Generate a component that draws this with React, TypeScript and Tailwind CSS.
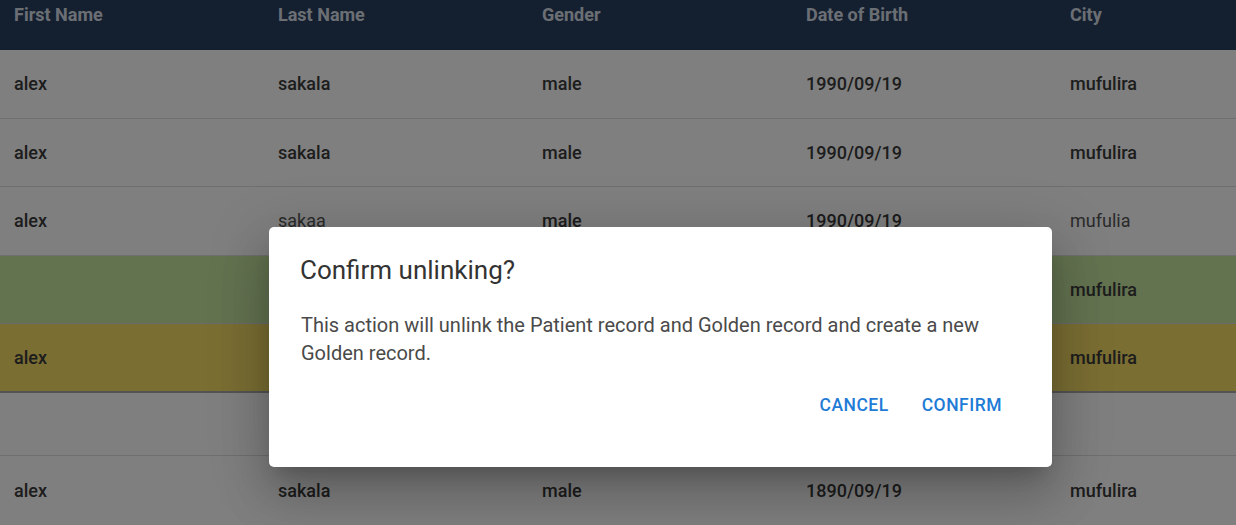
import React from "react"

const columns = ["First Name", "Last Name", "Gender", "Date of Birth", "City"]

type Cell = { text: string; plain?: boolean }

// cells hidden behind the dialog are left empty
const rows: { id: number; className: string; cells: Cell[] }[] = [
  {
    id: 1,
    className: "h-[69px] bg-white border-b border-[#dedede]",
    cells: [{ text: "alex" }, { text: "sakala" }, { text: "male" }, { text: "1990/09/19" }, { text: "mufulira" }],
  },
  {
    id: 2,
    className: "h-[68px] bg-white border-b border-[#dedede]",
    cells: [{ text: "alex" }, { text: "sakala" }, { text: "male" }, { text: "1990/09/19" }, { text: "mufulira" }],
  },
  {
    id: 3,
    className: "h-[69px] bg-white border-b border-[#dedede]",
    cells: [
      { text: "alex" },
      { text: "sakaa", plain: true },
      { text: "male" },
      { text: "1990/09/19" },
      { text: "mufulia", plain: true },
    ],
  },
  {
    id: 4,
    className: "h-[68px] bg-[#c6e6a0] border-b border-[#d6d6d6]",
    cells: [{ text: "" }, { text: "" }, { text: "" }, { text: "" }, { text: "mufulira" }],
  },
  {
    id: 5,
    className: "h-[69px] bg-[#f4dc66] border-b-2 border-[#a8a8a8]",
    cells: [{ text: "alex" }, { text: "" }, { text: "" }, { text: "" }, { text: "mufulira" }],
  },
  {
    id: 6,
    className: "h-[63px] bg-white border-b border-[#dedede]",
    cells: [{ text: "" }, { text: "" }, { text: "" }, { text: "" }, { text: "" }],
  },
  {
    id: 7,
    className: "h-[69px] bg-white",
    cells: [{ text: "alex" }, { text: "sakala" }, { text: "male" }, { text: "1890/09/19" }, { text: "mufulira" }],
  },
]

export default function App() {
  return (
    <div className="relative h-[525px] w-[1236px] overflow-hidden bg-white font-['Roboto',sans-serif]">
      {/* Table */}
      <div className="grid h-[50px] grid-cols-[264px_264px_264px_264px_1fr] bg-[#283f5e]">
        {columns.map((col) => (
          <div key={col} className="px-[14px] pt-[2px] text-[18px] leading-[25px] font-bold text-[#d6dfe8]">
            {col}
          </div>
        ))}
      </div>
      {rows.map((row) => (
        <div key={row.id} className={`grid grid-cols-[264px_264px_264px_264px_1fr] items-center ${row.className}`}>
          {row.cells.map((cell, i) => (
            <div
              key={i}
              className={
                cell.plain
                  ? "px-[14px] text-[18px] leading-[26px] font-normal text-[#555]"
                  : "px-[14px] text-[18px] leading-[26px] font-medium text-[#3a3a3a]"
              }
            >
              {cell.text}
            </div>
          ))}
        </div>
      ))}

      {/* Backdrop */}
      <div className="absolute inset-0 bg-black/50" />

      {/* Dialog */}
      <div className="absolute left-[269px] top-[227px] flex h-[240px] w-[783px] flex-col rounded-[5px] bg-white shadow-[0_14px_19px_-9px_rgba(0,0,0,0.2),0_30px_48px_4px_rgba(0,0,0,0.14),0_11px_58px_10px_rgba(0,0,0,0.12)]">
        <h2 className="px-[31px] pt-[22px] pb-[20px] text-[26px] leading-[42px] font-normal text-[#333]">
          Confirm unlinking?
        </h2>
        <p className="px-[32px] text-[20px] leading-[28px] text-[#4a4a4a]">
          This action will unlink the Patient record and Golden record and create a new Golden record.
        </p>
        <div className="flex justify-end gap-[13px] px-[40px] pt-[16px]">
          <button className="h-[45px] px-[10px] text-[17.5px] font-medium tracking-[0.5px] text-[#1e7bd6] uppercase">
            Cancel
          </button>
          <button className="h-[45px] px-[10px] text-[17.5px] font-medium tracking-[0.5px] text-[#1e7bd6] uppercase">
            Confirm
          </button>
        </div>
      </div>
    </div>
  )
}
